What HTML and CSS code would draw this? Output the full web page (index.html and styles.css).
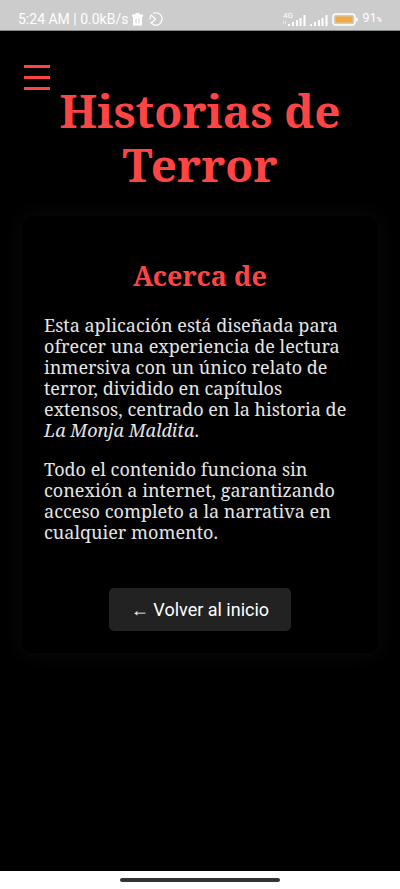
FILE: index.html
```html
<!DOCTYPE html>
<html lang="es">
  <head>
    <meta charset="UTF-8" />
    <meta name="viewport" content="width=device-width, initial-scale=1.0" />
    <title>Historias de Terror</title>

    <link rel="stylesheet" href="styles.css">
  </head>

  <body>
    <div class="status-bar">
      <div class="status-group">
        <span>5:24 AM | 0.0kB/s</span>
        <svg width="11" height="13" viewBox="0 0 11 13" fill="currentColor">
          <path d="M0 1.500h3.500V0h4v1.500H11V4H0z" />
          <path fill-rule="evenodd" d="M1 4h9v8.500H1zM3.500 5.500v5h1v-5zM6.500 5.500v5h1v-5z" />
        </svg>
        <svg class="clock" width="14" height="14" viewBox="0 0 14 14" fill="none" stroke="currentColor" stroke-width="1.200">
          <path d="M4 1.500A6.200 6.200 0 1 1 1.500 10M.8 7.500A6.200 6.200 0 0 1 2.600 2.600" />
          <path d="M2.500 3.500 6.500 7 2.500 11" />
        </svg>
      </div>
      <div class="status-group">
        <svg width="23" height="16" viewBox="0 0 23 16" fill="currentColor">
          <text class="network" x="0" y="7">4G</text>
          <path opacity=".5" d="M0 10h1v3H0zM2 10h1v3H2z" />
          <path d="M5 13h2v2H5zM9 11h2v4H9zM13 9h2v6h-2zM16.500 7h2v8h-2zM20.500 4h2v11h-2z" />
        </svg>
        <svg width="18" height="16" viewBox="0 0 18 16" fill="currentColor">
          <path d="M0 13h2v2H0zM4 11h2v4H4zM8 9h2v6H8zM11.500 7h2v8h-2zM15.500 4h2v11h-2z" />
        </svg>
        <svg width="26" height="13" viewBox="0 0 26 13">
          <rect x="1" y="1" width="22" height="11" rx="3" fill="none" stroke="currentColor" stroke-width="1.500" />
          <rect x="3.500" y="3.500" width="17" height="6" fill="#f2a93b" />
          <path d="M24 4.500q2 0 2 2t-2 2z" fill="currentColor" />
        </svg>
        <span class="battery">91<small class="percent">%</small></span>
      </div>
    </div>

    <button class="menu-button" aria-label="Abrir menú">
      <svg width="26" height="26" viewBox="0 0 26 26" fill="currentColor">
        <path d="M0 0h26v3H0zM0 11h26v3H0zM0 22h26v3H0z" />
      </svg>
    </button>

    <main class="content">
      <h1>Historias de Terror</h1>

      <section class="card">
        <h2>Acerca de</h2>
        <p>
          Esta aplicación está diseñada para ofrecer una experiencia de lectura
          inmersiva con un único relato de terror, dividido en capítulos
          extensos, centrado en la historia de <em>La Monja Maldita</em>.
        </p>
        <p>
          Todo el contenido funciona sin conexión a internet, garantizando
          acceso completo a la narrativa en cualquier momento.
        </p>
        <button class="back-button">← Volver al inicio</button>
      </section>
    </main>

    <div class="nav-bar"><div class="nav-handle"></div></div>
  </body>
</html>
```

FILE: styles.css
```css
* {
  box-sizing: border-box;
}

body {
  margin: 0;
  min-height: 100vh;
  display: flex;
  flex-direction: column;
  position: relative;
  background-color: #000;
  color: #e6e6e6;
  font-family: "Noto Serif", "Droid Serif", "DejaVu Serif", serif;
}

.status-bar {
  height: 31px;
  padding: 8px 18px 0;
  display: flex;
  justify-content: space-between;
  border-bottom: 1px solid #888;
  background-color: #ccc;
  color: #fff;
  font: 14px/22px Roboto, sans-serif;
}

.status-group {
  height: 22px;
  display: flex;
  align-items: center;
  gap: 4px;
}

.clock {
  margin-left: 2px;
}

.battery {
  font-size: 13px;
}

.network {
  font-size: 8px;
}

.percent {
  font-size: 7px;
  font-weight: 700;
}

.menu-button {
  position: absolute;
  top: 65px;
  left: 24px;
  padding: 0;
  border: 0;
  background: none;
  color: #ff4444;
}

.menu-button svg {
  display: block;
}

.content {
  flex: 1;
  padding: 52px 22px 24px;
}

h1,
h2 {
  margin: 0;
  color: #ff4444;
  text-align: center;
}

h1 {
  margin-bottom: 25px;
  font-size: 46px;
  line-height: 54px;
}

h2 {
  margin-bottom: 23px;
  font-size: 27px;
  line-height: 32px;
}

.card {
  padding: 44px 22px 22px;
  border-radius: 11px;
  background-color: #000;
  box-shadow: 0 0 22px rgba(255, 255, 255, 0.05);
}

.card p {
  margin: 0 0 18px;
  font-size: 18px;
  line-height: 21px;
}

.back-button {
  display: block;
  margin: 45px auto 0;
  padding: 11px 22px;
  border: 0;
  border-radius: 5px;
  background-color: #222;
  color: #fff;
  font: 18px/21px Roboto, sans-serif;
}

.nav-bar {
  height: 18px;
  display: flex;
  align-items: center;
  justify-content: center;
  background-color: #fff;
}

.nav-handle {
  width: 40%;
  height: 4px;
  border-radius: 2px;
  background-color: #333;
}
```
